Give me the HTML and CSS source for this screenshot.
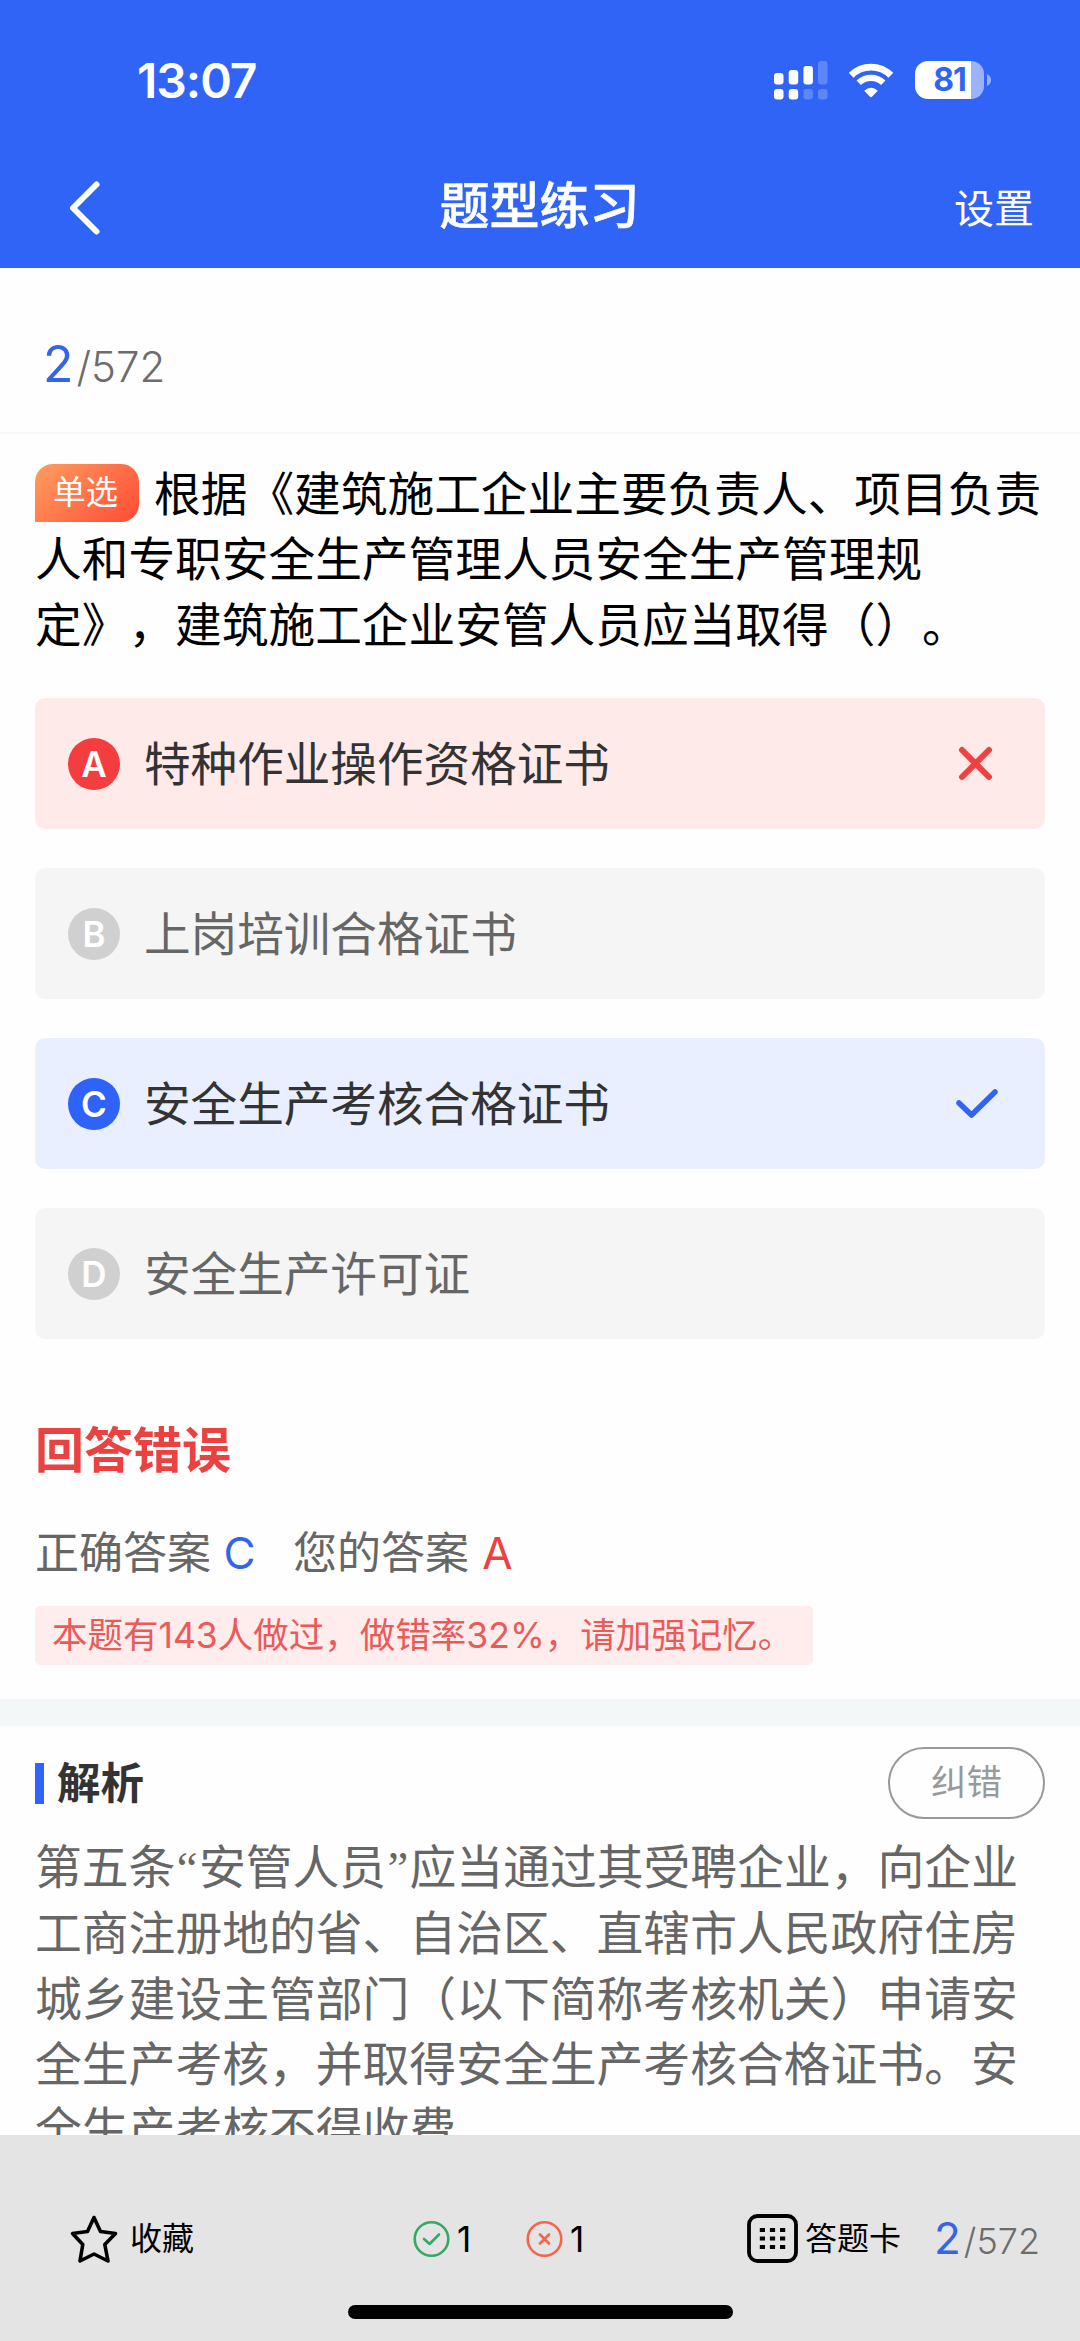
FILE: index.html
```html
<!DOCTYPE html>
<html lang="zh-CN">

<head>
    <meta charset="UTF-8">
    <meta name="viewport" content="width=device-width, initial-scale=1.0">
    <title>题型练习</title>
    <link rel="stylesheet" href="styles.css">
</head>

<body>
    <header class="header">
        <div class="status">
            <span class="time">13:07</span>
            <div class="status-icons">
                <svg class="signal" width="54" height="39" viewBox="0 0 54 39" fill="#fff">
                    <rect x="0" y="12" width="9.5" height="11.5" rx="3" />
                    <rect x="14.7" y="9" width="9.5" height="14.5" rx="3" />
                    <rect x="29.4" y="5" width="9.5" height="18.5" rx="3" />
                    <rect x="44" y="0" width="9.5" height="23.5" rx="3" opacity=".22" />
                    <rect x="0" y="28" width="9.5" height="10.5" rx="3" />
                    <rect x="14.7" y="28" width="9.5" height="10.5" rx="3" />
                    <rect x="29.4" y="28" width="9.5" height="10.5" rx="3" opacity=".22" />
                    <rect x="44" y="28" width="9.5" height="10.5" rx="3" opacity=".22" />
                </svg>
                <svg class="wifi" width="46" height="35" viewBox="0 0 46 36">
                    <path d="M2.6 12.6A29 29 0 0 1 43.4 12.6" fill="none" stroke="#fff" stroke-width="7" />
                    <path d="M10.4 20.4A18 18 0 0 1 35.6 20.4" fill="none" stroke="#fff" stroke-width="6.4" />
                    <path d="M16 28.6Q23 22.4 30 28.6L24 34.8Q23 35.6 22 34.8Z" fill="#fff" />
                </svg>
                <div class="battery"><span class="battery-level">81</span></div>
                <svg class="battery-cap" width="4" height="12" viewBox="0 0 4 12">
                    <path d="M0 0Q4 2 4 6T0 12Z" fill="#9cb2fc" />
                </svg>
            </div>
        </div>
        <div class="navbar">
            <svg class="back" width="34" height="56" viewBox="0 0 34 56">
                <path d="M29.5 4.5L6 28L29.5 51.5" fill="none" stroke="#fff" stroke-width="6" stroke-linecap="round" stroke-linejoin="round" />
            </svg>
            <h1 class="title">题型练习</h1>
            <span class="setting">设置</span>
        </div>
    </header>

    <div class="progress"><span class="current">2</span>/572</div>

    <!-- 题目 -->
    <main class="question">
        <p class="stem"><span class="tag">单选</span>根据《建筑施工企业主要负责人、项目负责人和专职安全生产管理人员安全生产管理规定》，建筑施工企业安管人员应当取得（）。</p>

        <ul class="options">
            <li class="option wrong">
                <span class="letter">A</span>
                <span class="text">特种作业操作资格证书</span>
                <svg class="mark" width="42" height="42" viewBox="0 0 42 42">
                    <path d="M7 7L34 34M34 7L7 34" stroke="#ee4141" stroke-width="6" stroke-linecap="round" />
                </svg>
            </li>
            <li class="option">
                <span class="letter">B</span>
                <span class="text">上岗培训合格证书</span>
            </li>
            <li class="option right">
                <span class="letter">C</span>
                <span class="text">安全生产考核合格证书</span>
                <svg class="mark" width="42" height="42" viewBox="0 0 42 42">
                    <path d="M4 20L16.5 32L40 9" fill="none" stroke="#3164f6" stroke-width="5.5" stroke-linecap="round" stroke-linejoin="round" />
                </svg>
            </li>
            <li class="option">
                <span class="letter">D</span>
                <span class="text">安全生产许可证</span>
            </li>
        </ul>

        <!-- 作答结果 -->
        <h2 class="result">回答错误</h2>
        <div class="answers">
            <span>正确答案</span><b class="answer-right">C</b>
            <span>您的答案</span><b class="answer-wrong">A</b>
        </div>
        <div class="tip">本题有143人做过，做错率32%，请加强记忆。</div>
    </main>

    <!-- 解析 -->
    <section class="analysis">
        <div class="analysis-head">
            <h3>解析</h3>
            <button class="report">纠错</button>
        </div>
        <p class="analysis-text">第五条<span class="quote">“</span>安管人员<span class="quote">”</span>应当通过其受聘企业，向企业工商注册地的省、自治区、直辖市人民政府住房城乡建设主管部门（以下简称考核机关）申请安全生产考核，并取得安全生产考核合格证书。安全生产考核不得收费</p>
    </section>

    <footer class="footer">
        <div class="toolbar">
            <div class="collect">
                <svg width="48" height="50" viewBox="0 0 48 50">
                    <path d="M24 3.5L30.5 17.5L45.5 19.5L34.8 30.5L38 47L24 40L10 47L12.8 30.5L2.5 19.5L17.5 17.5Z" fill="none" stroke="#000" stroke-width="3.6" stroke-linejoin="round" />
                </svg>
                <span>收藏</span>
            </div>
            <div class="count">
                <svg width="37" height="37" viewBox="0 0 37 37" fill="none" stroke="#35a866" stroke-width="2.6">
                    <circle cx="18.5" cy="18" r="16.8" />
                    <path d="M11 18L16.6 23L26 13.5" stroke-linecap="round" stroke-linejoin="round" />
                </svg>
                <span>1</span>
            </div>
            <div class="count count-wrong">
                <svg width="37" height="37" viewBox="0 0 37 37" fill="none" stroke="#f7644a" stroke-width="2.6">
                    <circle cx="18.5" cy="18" r="16.8" />
                    <path d="M14 13.5L23 22.5M23 13.5L14 22.5" stroke-linecap="round" />
                </svg>
                <span>1</span>
            </div>
            <div class="card">
                <svg width="51" height="50" viewBox="0 0 51 50">
                    <rect x="2" y="2" width="47" height="45" rx="8.5" fill="none" stroke="#000" stroke-width="3.8" />
                    <path d="M12.8 16h5.2M22.9 16h5.2M33 16h5.2M12.8 24.5h5.2M22.9 24.5h5.2M33 24.5h5.2M12.8 33h5.2M22.9 33h5.2M33 33h5.2" stroke="#000" stroke-width="3.8" />
                </svg>
                <span>答题卡</span>
            </div>
            <div class="progress-small"><span class="current">2</span>/572</div>
        </div>
        <div class="home-bar"></div>
    </footer>
</body>

</html>
```
FILE: styles.css
```css
* {
    margin: 0;
    padding: 0;
    box-sizing: border-box;
}

body {
    display: flex;
    flex-direction: column;
    height: 2341px;
    overflow: hidden;
    font-family: Inter, "Noto Sans CJK SC", sans-serif;
    text-spacing-trim: space-all;
    background-color: #fefefe;
}

svg {
    display: block;
    flex: none;
    overflow: visible;
}

.header {
    height: 268px;
    flex: none;
    background-color: #3064f7;
    color: #fff;
}

.status {
    display: flex;
    justify-content: space-between;
    height: 143px;
    padding: 51px 89px 0 137px;
}

.time {
    font-size: 48px;
    line-height: 60px;
    font-weight: 600;
    letter-spacing: -1px;
}

.status-icons {
    display: flex;
    align-items: center;
    height: 58px;
}

.wifi {
    margin-left: 20px;
}

.battery {
    width: 69px;
    height: 38px;
    margin-left: 21px;
    border-radius: 13px;
    background: linear-gradient(to right, #fff 81%, #9cb2fc 81%);
    text-align: center;
}

.battery-level {
    display: block;
    font-size: 32px;
    line-height: 38px;
    font-weight: 700;
    letter-spacing: -1px;
    color: #3064f7;
}

.battery-cap {
    margin-left: 3px;
}

.navbar {
    display: grid;
    grid-template-columns: 1fr auto 1fr;
    align-items: center;
    height: 125px;
    padding: 0 46px 0 67px;
}

.title {
    margin-right: 22px;
    font-size: 50px;
    line-height: 60px;
    font-weight: 500;
    -webkit-text-stroke: 0.6px #fff;
}

.back {
    margin-top: 4px;
}

.setting {
    justify-self: end;
    margin-top: 6px;
    font-size: 40px;
    line-height: 60px;
}

.progress {
    height: 166px;
    flex: none;
    padding: 60px 43px 0;
    border-bottom: 2px solid #f8f8f8;
    font-size: 42px;
    line-height: 72px;
    font-weight: 350;
    color: #6c6c6c;
}

.progress .current {
    margin-right: 3px;
    font-size: 50px;
    font-weight: 400;
    color: #3565e6;
}

.question {
    height: 1292px;
    flex: none;
    padding: 28px 35px 0;
    border-bottom: 27px solid #f3f7f8;
}

.stem {
    height: 236px;
    font-size: 46.7px;
    line-height: 65.3px;
    color: #000;
}

.tag {
    display: inline-block;
    width: 104px;
    height: 58px;
    margin-right: 15px;
    padding-right: 3px;
    border-radius: 18px 18px 18px 0;
    background: linear-gradient(135deg, #ff9e60, #ff4b35);
    font-size: 32.5px;
    line-height: 58px;
    text-align: center;
    vertical-align: 7px;
    color: #fff;
}

.options {
    display: flex;
    flex-direction: column;
    gap: 39px;
    list-style: none;
}

.option {
    display: flex;
    align-items: center;
    height: 131px;
    padding: 0 48px 0 33px;
    border-radius: 10px;
    background-color: #f5f5f5;
    font-size: 46.6px;
    line-height: 60px;
    color: #666;
}

.option .letter {
    width: 52px;
    height: 52px;
    margin-right: 24px;
    border-radius: 50%;
    background-color: #d0d0d0;
    font-size: 35px;
    line-height: 52px;
    font-weight: 600;
    text-align: center;
    color: #fff;
}

.option .mark {
    margin-left: auto;
}

.option.wrong {
    background-color: #feebe9;
    color: #333;
}

.wrong .letter {
    background-color: #f43d3f;
}

.option.right {
    background-color: #e9effe;
    color: #333;
}

.right .letter {
    background-color: #2f62f8;
}

.result {
    margin-top: 76px;
    font-size: 49px;
    line-height: 72px;
    font-weight: 700;
    color: #ec4141;
}

.answers {
    display: flex;
    align-items: baseline;
    margin-top: 32px;
    font-size: 44px;
    line-height: 68px;
    color: #666;
}

.answers b {
    width: 35px;
    margin-left: 11px;
    margin-right: 36px;
    font-weight: 400;
    text-align: center;
}

.answer-right {
    color: #3565e6;
}

.answers .answer-wrong {
    color: #ec4141;
}

.tip {
    width: 778px;
    height: 59px;
    margin-top: 19px;
    padding-left: 17px;
    border-radius: 5px;
    background-color: #ffeced;
    font-size: 35.5px;
    line-height: 60px;
    white-space: nowrap;
    color: #ea5b58;
}

.analysis {
    flex: 1;
    min-height: 0;
    overflow: hidden;
    padding: 20px 35px 0;
}

.analysis-head {
    display: flex;
    align-items: center;
    justify-content: space-between;
    height: 74px;
}

.analysis-head h3 {
    height: 41px;
    padding-left: 13px;
    border-left: 9px solid #3064f7;
    font-size: 43.5px;
    line-height: 41px;
    font-weight: 700;
    color: #333;
}

.report {
    width: 157px;
    height: 72px;
    border: 2px solid #999;
    border-radius: 36px;
    background: none;
    font-family: inherit;
    font-size: 35.5px;
    line-height: 66px;
    color: #999;
}

.analysis-text {
    margin-top: 15px;
    font-size: 46.8px;
    line-height: 65.3px;
    color: #666;
}

.quote {
    display: inline-block;
    width: 23.5px;
    font-family: "Liberation Serif", serif;
    text-align: center;
}

.footer {
    height: 206px;
    flex: none;
    padding-top: 74px;
    background-color: #e4e4e4;
}

.toolbar {
    display: flex;
    align-items: center;
    height: 60px;
    padding-left: 70px;
    font-size: 32px;
    line-height: 60px;
    color: #000;
}

.collect,
.count,
.card {
    display: flex;
    align-items: center;
}

.collect {
    width: 343px;
    gap: 12px;
}

.count {
    width: 113px;
    gap: 7px;
    font-size: 35px;
}

.count-wrong {
    width: 221px;
}

.card {
    width: 187px;
    gap: 7px;
}

.progress-small {
    font-size: 36px;
    font-weight: 350;
    color: #6c6c6c;
}

.progress-small .current {
    margin-right: 3px;
    font-size: 44px;
    font-weight: 400;
    color: #3565e6;
}

.home-bar {
    width: 385px;
    height: 14px;
    margin: 36px auto 0;
    border-radius: 7px;
    background-color: #000;
}
```
